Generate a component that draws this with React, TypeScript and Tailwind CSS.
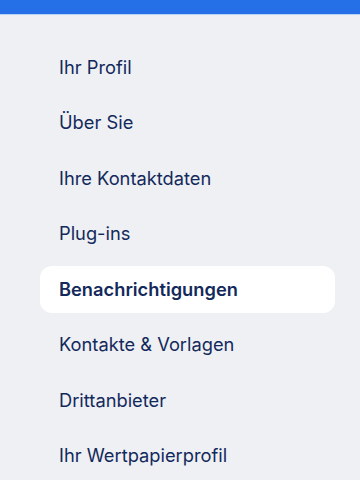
import React from "react";

const items = [
  "Ihr Profil",
  "Über Sie",
  "Ihre Kontaktdaten",
  "Plug-ins",
  "Benachrichtigungen",
  "Kontakte & Vorlagen",
  "Drittanbieter",
  "Ihr Wertpapierprofil",
];

export default function App() {
  return (
    <div
      className="w-[360px] h-[480px] overflow-hidden bg-[#eef0f4]"
      style={{ fontFamily: "Inter, 'Noto Sans', sans-serif" }}
    >
      <div className="h-[15px] bg-[#2570e6] border-b border-[#b9d3f7]" />
      <div className="flex flex-col gap-[8.5px] pt-[29px] pl-[40px] pr-[25px]">
        {items.map((t, i) => {
          const active = i === 4;
          return (
            <div
              key={t}
              className={
                "h-[47px] shrink-0 flex items-center pl-[19px] rounded-[12px] text-[18.3px] text-[#13295b] " +
                (active ? "bg-white font-semibold" : "font-normal")
              }
            >
              {t}
            </div>
          );
        })}
      </div>
    </div>
  );
}
